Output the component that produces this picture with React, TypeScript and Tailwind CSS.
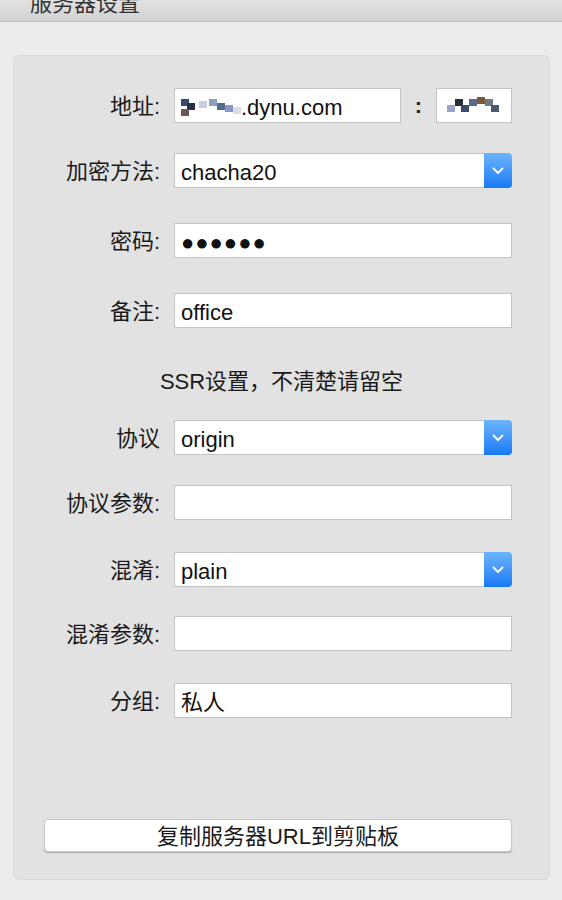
const font = { fontFamily: '"Liberation Sans", "Noto Sans CJK SC", sans-serif' };

function Label({ children }: { children: React.ReactNode }) {
  return (
    <div className="w-[146px] shrink-0 pt-[3px] text-right text-[22px] leading-none text-[#1a1a1a]">
      {children}
    </div>
  );
}

function TextBox({ value, className = "" }: { value?: React.ReactNode; className?: string }) {
  return (
    <div
      className={`flex h-[35px] shrink-0 items-center border border-[#c3c3c3] bg-white px-[6px] pt-[3px] text-[22px] text-[#111] ${className}`}
    >
      {value}
    </div>
  );
}

function Select({ value }: { value: string }) {
  return (
    <div className="flex h-[35px] w-[338px] items-stretch">
      <div className="flex flex-1 items-center border border-r-0 border-[#c3c3c3] bg-white px-[6px] pt-[3px] text-[22px] text-[#111]">
        {value}
      </div>
      <div className="flex w-[28px] items-center justify-center rounded-r-[4px] bg-gradient-to-b from-[#6cb4fb] to-[#1479f5]">
        <svg width="12" height="8" viewBox="0 0 12 8" fill="none">
          <path d="M1.5 1.5 6 6l4.5-4.5" stroke="white" strokeWidth="1.8" strokeLinecap="round" strokeLinejoin="round" />
        </svg>
      </div>
    </div>
  );
}

function Row({ label, children, mt }: { label: string; children: React.ReactNode; mt: string }) {
  return (
    <div className={`flex items-center gap-[14px] ${mt}`}>
      <Label>{label}</Label>
      {children}
    </div>
  );
}

function Blur({ cells }: { cells: [number, number, string][] }) {
  return (
    <span className="relative inline-block h-[20px] align-middle" style={{ width: Math.max(...cells.map((c) => c[0] + 8)) }}>
      {cells.map(([x, y, c], i) => (
        <span key={i} className="absolute h-[7px] w-[8px]" style={{ left: x, top: y, background: c }} />
      ))}
    </span>
  );
}

export default function App() {
  return (
    <div className="min-h-[900px] w-[562px] bg-[#ececec]" style={font}>
      <div className="h-[22px] overflow-hidden border-b border-[#bdbdbd] bg-gradient-to-b from-[#e3e2e3] to-[#d3d2d3]">
        <div className="-mt-[7px] pl-[30px] text-[22px] leading-[22px] text-[#333]">服务器设置</div>
      </div>

      <div className="mx-[13px] mt-[33px] flex h-[825px] w-[537px] flex-col rounded-[6px] border border-[#d9d9d9] bg-[#e2e2e2]">
        <Row label="地址:" mt="mt-[32px]">
          <div className="flex w-[338px] items-center">
            <TextBox
              className="w-[227px]"
              value={
                <>
                  <Blur
                    cells={[
                      [0, 2, "#3c4a6a"],
                      [6, 6, "#2a2f4a"],
                      [0, 12, "#6a5a55"],
                      [18, 4, "#c9cfe0"],
                      [28, 2, "#8aa0c0"],
                      [36, 6, "#556b8c"],
                      [44, 8, "#8b96c8"],
                      [52, 10, "#d8dcea"],
                    ]}
                  />
                  <span>.dynu.com</span>
                </>
              }
            />
            <span className="w-[35px] text-center text-[22px] font-bold text-[#222]">:</span>
            <TextBox
              className="w-[76px]"
              value={
                <Blur
                  cells={[
                    [4, 8, "#9aa4c4"],
                    [12, 2, "#2a2f3a"],
                    [18, 8, "#3a4a6a"],
                    [26, 2, "#5a6a8a"],
                    [34, 0, "#7a5a3a"],
                    [42, 2, "#6a7a8a"],
                    [48, 8, "#4a5a6a"],
                  ]}
                />
              }
            />
          </div>
        </Row>
        <Row label="加密方法:" mt="mt-[30px]">
          <Select value="chacha20" />
        </Row>
        <Row label="密码:" mt="mt-[35px]">
          <TextBox className="w-[338px]" value={<span className="tracking-[1px]">●●●●●●</span>} />
        </Row>
        <Row label="备注:" mt="mt-[35px]">
          <TextBox className="w-[338px]" value="office" />
        </Row>

        <div className="mt-[42px] text-center text-[22px] leading-[24px] text-[#1a1a1a]">SSR设置，不清楚请留空</div>

        <Row label="协议" mt="mt-[26px]">
          <Select value="origin" />
        </Row>
        <Row label="协议参数:" mt="mt-[30px]">
          <TextBox className="w-[338px]" />
        </Row>
        <Row label="混淆:" mt="mt-[32px]">
          <Select value="plain" />
        </Row>
        <Row label="混淆参数:" mt="mt-[29px]">
          <TextBox className="w-[338px]" />
        </Row>
        <Row label="分组:" mt="mt-[32px]">
          <TextBox className="w-[338px]" value="私人" />
        </Row>

        <div className="mt-auto mb-[27px] ml-[30px] w-[468px]">
          <div className="flex h-[33px] items-center justify-center rounded-[4px] border border-[#c8c8c8] bg-white pt-[2px] text-[22px] text-[#1a1a1a] shadow-[0_1px_1px_rgba(0,0,0,0.25)]">
            复制服务器URL到剪贴板
          </div>
        </div>
      </div>
    </div>
  );
}
